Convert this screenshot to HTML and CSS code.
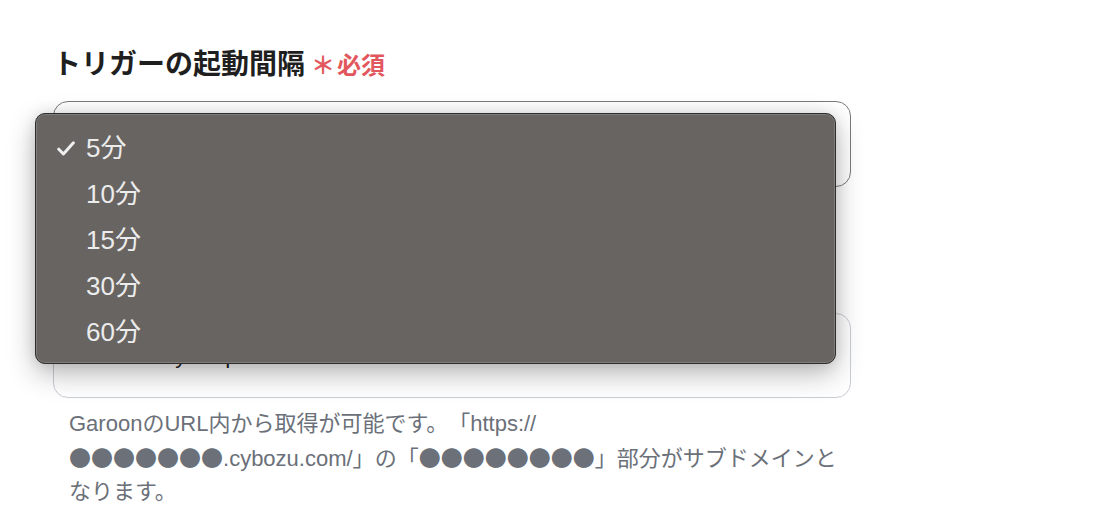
FILE: index.html
```html
<!DOCTYPE html>
<html lang="ja">
<head>
<meta charset="utf-8">
<link rel="stylesheet" href="styles.css">
</head>
<body>
<div class="page">
  <div class="form">
    <div class="field">
      <div class="label-row">
        <span class="label">トリガーの起動間隔</span>
        <span class="req"><span class="ast">＊</span>必須</span>
      </div>
      <div class="select">5分</div>
    </div>
    <div class="field field-2">
      <div class="label-row">
        <span class="label">サブドメイン</span>
        <span class="req"><span class="ast">＊</span>必須</span>
      </div>
      <div class="input">w2zb-mnyereq</div>
      <p class="help">GaroonのURL内から取得が可能です。「https://<br><span class="nw"><span class="dots">●●●●●●●</span>.cybozu.com/」</span>の「<span class="dots">●●●●●●●●</span>」部分がサブドメインとなります。</p>
    </div>
  </div>
  <div class="menu">
    <div class="item"><span class="check"><svg width="18" height="15" viewBox="0 0 18 15"><polyline points="1.8,8.2 6.4,13 16.4,1.8" fill="none" stroke="#efefef" stroke-width="3" stroke-linecap="round" stroke-linejoin="round"/></svg></span><span class="opt">5分</span></div>
    <div class="item"><span class="check"></span><span class="opt">10分</span></div>
    <div class="item"><span class="check"></span><span class="opt">15分</span></div>
    <div class="item"><span class="check"></span><span class="opt">30分</span></div>
    <div class="item"><span class="check"></span><span class="opt">60分</span></div>
  </div>
</div>
</body>
</html>
```
FILE: styles.css
```css
html, body {
  margin: 0;
  background: #ffffff;
}
body {
  font-family: "Liberation Sans", "Noto Sans CJK JP", sans-serif;
  color: #222;
}
.page {
  position: relative;
  width: 1094px;
  height: 508px;
  overflow: hidden;
}
.form {
  width: 798px;
  padding: 45px 0 0 53px;
}
.label-row {
  display: flex;
  align-items: baseline;
  gap: 6px;
  height: 34px;
  line-height: 34px;
}
.label {
  font-family: "Noto Sans CJK JP", sans-serif;
  font-size: 28px;
  font-weight: 700;
  color: #1f1f1f;
}
.req {
  font-family: "Noto Sans CJK JP", sans-serif;
  font-size: 24px;
  font-weight: 700;
  color: #e2575d;
  display: flex;
  align-items: baseline;
}
.ast {
  font-size: 24px;
  margin-right: 2px;
}
.select {
  margin-top: 22px;
  height: 86px;
  border: 1.5px solid #7a7a7a;
  border-radius: 15px;
  box-sizing: border-box;
  display: flex;
  align-items: center;
  padding-left: 32px;
  font-size: 22px;
  background: #fff;
}
.field-2 {
  margin-top: 70px;
}
.input {
  margin-top: 22px;
  height: 85px;
  border: 1.5px solid #c9cdd4;
  border-radius: 15px;
  box-sizing: border-box;
  display: flex;
  align-items: center;
  padding-left: 32px;
  font-size: 22px;
  color: #222;
  background: #fff;
}
.help {
  margin: 9px 0 0;
  padding-left: 16px;
  font-size: 22px;
  line-height: 33px;
  color: #6b7079;
  text-spacing-trim: space-all;
}
.nw {
  white-space: nowrap;
}
.dots {
  font-family: "Noto Sans CJK JP", sans-serif;
  line-height: 33px;
}
.menu {
  position: absolute;
  left: 35px;
  top: 113px;
  width: 801px;
  height: 251px;
  box-sizing: border-box;
  border: 1px solid #2e2d2c;
  border-radius: 10px;
  background: #676462;
  box-shadow: inset 0 0 0 1px rgba(255, 255, 255, 0.16), 0 10px 28px rgba(0, 0, 0, 0.28), 0 0 14px rgba(0, 0, 0, 0.1);
  padding-top: 11px;
}
.item {
  height: 46px;
  display: flex;
  align-items: center;
}
.check {
  width: 50px;
  padding-left: 21px;
  box-sizing: border-box;
  display: flex;
  align-items: center;
}
.check svg {
  display: block;
}
.opt {
  font-family: "Liberation Sans", "Noto Sans CJK JP", sans-serif;
  font-size: 26px;
  color: #ececec;
  line-height: 46px;
}
```
